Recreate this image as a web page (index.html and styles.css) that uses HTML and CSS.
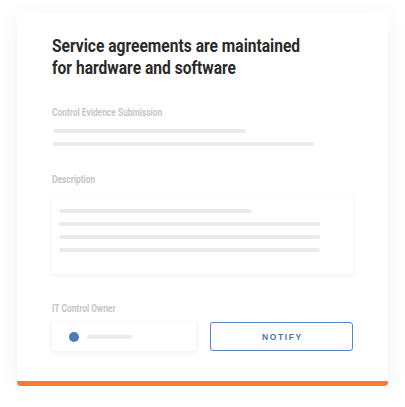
FILE: index.html
```html
<!DOCTYPE html>
<html lang="en">
<head>
<meta charset="utf-8">
<title>Service agreements</title>
<link rel="stylesheet" href="styles.css">
</head>
<body>
<div class="card">
  <h1 class="title"><span class="line">Service agreements are maintained</span><span class="line">for hardware and software</span></h1>

  <div class="label label-first"><span class="cond">Control Evidence Submission</span></div>
  <div class="skel skel-a"></div>
  <div class="skel skel-b"></div>

  <div class="label label-desc"><span class="cond">Description</span></div>
  <div class="desc-box">
    <div class="skel skel-c"></div>
    <div class="skel skel-d"></div>
    <div class="skel skel-d"></div>
    <div class="skel skel-d"></div>
  </div>

  <div class="label label-owner"><span class="cond">IT Control Owner</span></div>
  <div class="owner-row">
    <div class="owner-box">
      <span class="dot"></span>
      <span class="skel skel-owner"></span>
    </div>
    <button class="notify">NOTIFY</button>
  </div>
</div>
</body>
</html>
```
FILE: styles.css
```css
html, body {
  margin: 0;
  padding: 0;
  background: #ffffff;
}

body {
  padding: 13px 17px 0 17px;
}

.card {
  box-sizing: border-box;
  width: 371px;
  height: 373px;
  padding: 22px 35px 0 35px;
  background: #ffffff;
  border-bottom: 5px solid #ff7a2a;
  border-radius: 4px;
  box-shadow: 0 4px 22px rgba(40, 60, 110, 0.07);
}

.title {
  margin: 0;
  font-family: Roboto, "Liberation Sans", sans-serif;
  font-weight: 700;
  font-size: 17.5px;
  line-height: 22px;
  color: #2a2a2a;
  white-space: nowrap;
}

.title .line {
  display: block;
  transform: scaleX(0.89);
  transform-origin: left center;
}

.label {
  font-family: Roboto, "Liberation Sans", sans-serif;
  font-weight: 700;
  font-size: 10px;
  line-height: 12px;
  color: #c6c6c6;
  white-space: nowrap;
}

.cond {
  display: inline-block;
  transform: scaleX(0.84);
  transform-origin: left center;
}

.label-first { margin-top: 28px; }
.label-desc { margin-top: 28px; }
.label-owner { margin-top: 29px; }

.skel {
  display: block;
  height: 4px;
  border-radius: 2px;
  background: #ebebeb;
}

.skel-a { width: 193px; margin-top: 10px; margin-left: 1px; }
.skel-b { width: 261px; margin-top: 9px; margin-left: 1px; }

.desc-box {
  box-sizing: border-box;
  width: 301px;
  height: 81px;
  margin-top: 7px;
  padding: 16px 7px 0 7px;
  background: #ffffff;
  border-radius: 2px;
  box-shadow: 0 1px 5px rgba(40, 60, 110, 0.08);
}

.skel-c { width: 193px; }
.skel-d { width: 261px; margin-top: 9px; }

.owner-row {
  display: flex;
  gap: 14px;
  margin-top: 7px;
  height: 29px;
}

.owner-box {
  box-sizing: border-box;
  width: 144px;
  height: 29px;
  display: flex;
  align-items: center;
  padding-left: 17px;
  gap: 8px;
  background: #ffffff;
  border-radius: 2px;
  box-shadow: 0 1px 5px rgba(40, 60, 110, 0.1);
}

.dot {
  width: 10px;
  height: 10px;
  border-radius: 50%;
  background: #4d7bbd;
}

.skel-owner { width: 45px; }

.notify {
  box-sizing: border-box;
  width: 143px;
  height: 29px;
  margin: 0;
  padding: 0 0 0 2px;
  background: #ffffff;
  border: 1px solid #5a86c7;
  border-radius: 3px;
  font-family: "Liberation Sans", Arial, sans-serif;
  font-weight: 700;
  font-size: 8.5px;
  letter-spacing: 1.6px;
  color: #4f74ab;
}
```
